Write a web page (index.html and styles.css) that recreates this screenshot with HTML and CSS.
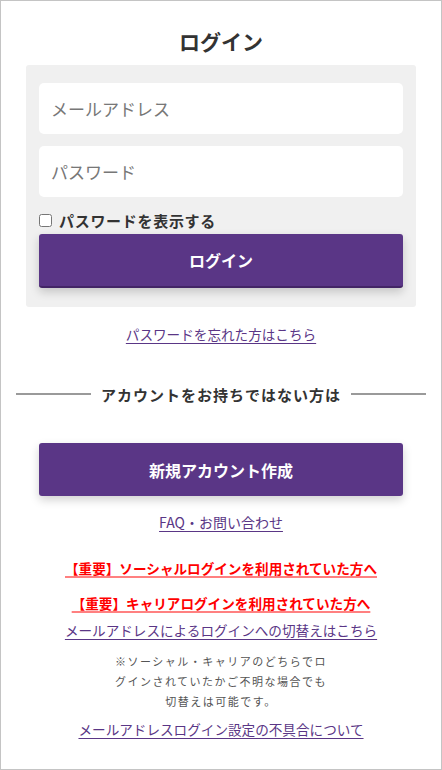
FILE: index.html
```html
<!DOCTYPE html>
<html lang="ja">
<head>
  <meta charset="UTF-8">
  <meta name="viewport" content="width=device-width, initial-scale=1.0">
  <title>ログイン</title>
  <link rel="stylesheet" href="styles.css">
</head>
<body>

<div class="page">
  <h1 class="title">ログイン</h1>

  <form class="login-box">
    <input type="email" class="field" placeholder="メールアドレス">
    <input type="password" class="field" placeholder="パスワード">
    <label class="show-pass"><input type="checkbox"> パスワードを表示する</label>
    <button type="button" class="btn btn-login">ログイン</button>
  </form>

  <a href="#" class="link forgot">パスワードを忘れた方はこちら</a>

  <div class="divider"><span>アカウントをお持ちではない方は</span></div>

  <button type="button" class="btn btn-signup">新規アカウント作成</button>

  <a href="#" class="link faq">FAQ・お問い合わせ</a>

  <a href="#" class="notice notice-social">【重要】ソーシャルログインを利用されていた方へ</a>
  <a href="#" class="notice notice-carrier">【重要】キャリアログインを利用されていた方へ</a>
  <a href="#" class="link switch">メールアドレスによるログインへの切替えはこちら</a>

  <p class="note">※ソーシャル・キャリアのどちらでロ<br>グインされていたかご不明な場合でも<br>切替えは可能です。</p>

  <a href="#" class="link trouble">メールアドレスログイン設定の不具合について</a>
</div>

</body>
</html>
```

FILE: styles.css
```css
html, body {
  margin: 0;
  padding: 0;
}

body {
  font-family: "Noto Sans CJK JP", "Noto Sans", sans-serif;
  color: #333;
  background: #fff;
}

.page {
  box-sizing: border-box;
  width: 442px;
  height: 770px;
  border: 1px solid #c4c4c4;
  display: flex;
  flex-direction: column;
  align-items: center;
}

.title {
  font-size: 21px;
  line-height: 30px;
  font-weight: bold;
  margin: 25px 0 9px;
  color: #333;
}

.login-box {
  box-sizing: border-box;
  width: 390px;
  background: #f0f0f0;
  border-radius: 3px;
  padding: 18px 13px 19px;
  display: flex;
  flex-direction: column;
}

.field {
  box-sizing: border-box;
  height: 51px;
  border: none;
  border-radius: 5px;
  background: #fff;
  padding: 0 12px;
  margin-bottom: 12px;
  font-family: inherit;
  font-size: 17px;
  color: #333;
}

.field::placeholder {
  color: #777;
}

.show-pass {
  display: flex;
  align-items: center;
  height: 22px;
  font-size: 15px;
  font-weight: bold;
  letter-spacing: 0.7px;
  color: #333;
}

.show-pass input {
  width: 13px;
  height: 13px;
  margin: 0 7px 0 0;
}

.btn {
  box-sizing: border-box;
  width: 364px;
  border: none;
  border-radius: 3px;
  background: #5a3686;
  color: #fff;
  font-family: inherit;
  font-size: 16px;
  font-weight: bold;
  box-shadow: 0 4px 10px rgba(0, 0, 0, 0.18);
}

.btn-login {
  height: 54px;
  margin-top: 3px;
  border-bottom: 2px solid #432566;
}

.btn-signup {
  height: 53px;
  margin-top: 39px;
}

.link {
  color: #5a3686;
  line-height: 20px;
  text-decoration: underline;
  text-underline-offset: 3px;
}

.forgot {
  font-size: 13.6px;
  margin-top: 17px;
}

.divider {
  box-sizing: border-box;
  width: 410px;
  margin-top: 40px;
  display: flex;
  align-items: center;
  gap: 10px;
  height: 20px;
  font-size: 15px;
  font-weight: bold;
  letter-spacing: 1px;
  color: #333;
}

.divider::before,
.divider::after {
  content: "";
  flex: 1;
  height: 2px;
  background: #9a9a9a;
}

.faq {
  font-size: 14px;
  margin-top: 16px;
}

.notice {
  color: #ff0000;
  font-size: 13.6px;
  font-weight: bold;
  line-height: 20px;
  text-decoration: underline;
  text-decoration-color: #ff8080;
  text-decoration-thickness: 2px;
  text-underline-offset: 2px;
}

.notice-social {
  margin-top: 26px;
}

.notice-carrier {
  margin-top: 15px;
}

.switch {
  font-size: 13.6px;
  margin-top: 7px;
}

.note {
  margin: 11px 0 0;
  font-size: 11px;
  line-height: 20px;
  letter-spacing: 1.5px;
  text-align: center;
  color: #555;
}

.trouble {
  font-size: 13.6px;
  margin-top: 8px;
}
```
